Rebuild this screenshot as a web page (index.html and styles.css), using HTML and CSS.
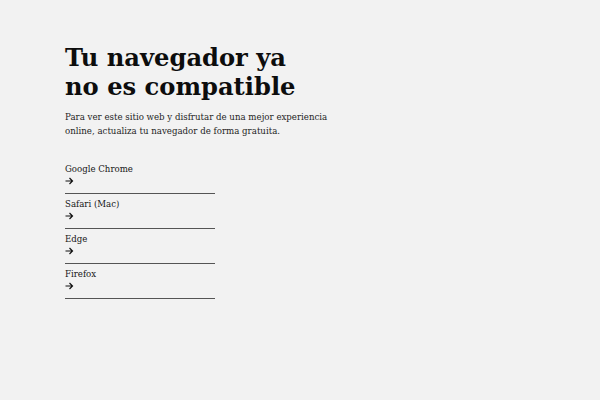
FILE: index.html
```html
<!DOCTYPE html>
<html lang="es">
<head>
<meta charset="utf-8">
<title>Navegador no compatible</title>
<link rel="stylesheet" href="styles.css">
</head>
<body>
<main class="page">
  <h1 class="title">Tu navegador ya<br>no es compatible</h1>
  <p class="lead">Para ver este sitio web y disfrutar de una mejor experiencia<br>online, actualiza tu navegador de forma gratuita.</p>
  <ul class="browsers">
    <li class="browser"><a class="browser-link" href="#"><span class="name">Google Chrome</span><svg class="arrow" width="9" height="8" viewBox="0 0 9 8"><path d="M0.5 4H7.5M4.5 1L7.5 4L4.5 7" fill="none" stroke="#111" stroke-width="1.2"/></svg></a></li>
    <li class="browser"><a class="browser-link" href="#"><span class="name">Safari (Mac)</span><svg class="arrow" width="9" height="8" viewBox="0 0 9 8"><path d="M0.5 4H7.5M4.5 1L7.5 4L4.5 7" fill="none" stroke="#111" stroke-width="1.2"/></svg></a></li>
    <li class="browser"><a class="browser-link" href="#"><span class="name">Edge</span><svg class="arrow" width="9" height="8" viewBox="0 0 9 8"><path d="M0.5 4H7.5M4.5 1L7.5 4L4.5 7" fill="none" stroke="#111" stroke-width="1.2"/></svg></a></li>
    <li class="browser"><a class="browser-link" href="#"><span class="name">Firefox</span><svg class="arrow" width="9" height="8" viewBox="0 0 9 8"><path d="M0.5 4H7.5M4.5 1L7.5 4L4.5 7" fill="none" stroke="#111" stroke-width="1.2"/></svg></a></li>
  </ul>
</main>
</body>
</html>
```
FILE: styles.css
```css
html, body {
  margin: 0;
  padding: 0;
  background: #f2f2f2;
}
body {
  font-family: "DejaVu Serif", serif;
  color: #111;
}
.page {
  padding: 43px 65px;
}
.title {
  margin: 0;
  font-size: 24.2px;
  line-height: 29px;
  font-weight: bold;
  color: #0d0d0d;
}
.lead {
  margin: 9px 0 0;
  font-size: 8.65px;
  line-height: 14px;
  color: #1e1e1e;
}
.browsers {
  list-style: none;
  margin: 21px 0 0;
  padding: 0;
  width: 150px;
}
.browser {
  border-bottom: 1px solid #555;
}
.browser-link {
  display: flex;
  flex-direction: column;
  align-items: flex-start;
  padding: 4px 0 8px;
  color: #161616;
  text-decoration: none;
  font-size: 8.6px;
  line-height: 12px;
}
.arrow {
  display: block;
  margin-top: 2px;
}
```
